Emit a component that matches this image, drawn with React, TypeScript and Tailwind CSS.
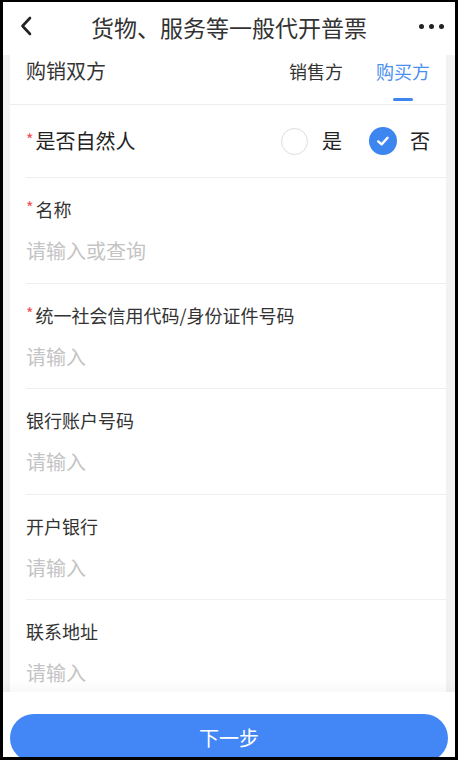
import { useState } from 'react';

const fields = [
  { label: '名称', required: true, placeholder: '请输入或查询' },
  { label: '统一社会信用代码/身份证件号码', required: true, placeholder: '请输入' },
  { label: '银行账户号码', required: false, placeholder: '请输入' },
  { label: '开户银行', required: false, placeholder: '请输入' },
  { label: '联系地址', required: false, placeholder: '请输入' },
];

const font = { fontFamily: '"Noto Sans CJK SC", "Noto Sans", sans-serif' };

function Star() {
  return <span className="text-[#f0504d] text-[16px] mr-[2px] relative -top-[2px]">*</span>;
}

function Check() {
  return (
    <span className="flex h-[28px] w-[28px] items-center justify-center rounded-full bg-[#3d86f0]">
      <svg width="16" height="16" viewBox="0 0 16 16">
        <path d="M3.2 8.4 L6.6 11.4 L12.6 4.8" fill="none" stroke="#fff" strokeWidth="2.4" strokeLinecap="round" strokeLinejoin="round" />
      </svg>
    </span>
  );
}

export default function App() {
  const [natural, setNatural] = useState(false);

  return (
    <div
      className="w-[458px] h-[760px] bg-black pt-[2px] pl-[3px] pr-[3px] pb-[3px] overflow-hidden"
      style={font}
    >
      <div className="flex h-full flex-col bg-white">
        {/* Header */}
        <div className="relative flex h-[53px] shrink-0 items-center justify-center pb-[4px]">
          <svg className="absolute left-[16px] top-[14px]" width="16" height="20" viewBox="0 0 16 20">
            <path d="M11 2 L3.5 10 L11 18" fill="none" stroke="#222" strokeWidth="2.6" strokeLinecap="round" strokeLinejoin="round" />
          </svg>
          <h1 className="text-[23px] leading-[30px] text-[#333]">货物、服务等一般代开普票</h1>
          <div className="absolute right-[11px] top-[22px] flex gap-[5px]">
            <span className="h-[5px] w-[5px] rounded-full bg-[#222]" />
            <span className="h-[5px] w-[5px] rounded-full bg-[#222]" />
            <span className="h-[5px] w-[5px] rounded-full bg-[#222]" />
          </div>
        </div>

        {/* Body */}
        <div className="flex-1 overflow-hidden bg-[#f2f2f2] pl-[7px] pr-[9px]">
          <div className="bg-white">
            {/* Section header */}
            <div className="flex h-[50px] items-start justify-between border-b border-[#eeeeee] pl-[16px] pr-[16px]">
              <span className="pt-[1px] text-[20px] leading-[30px] text-[#333]">购销双方</span>
              <div className="flex gap-[33px]">
                <span className="pt-[1px] text-[18px] leading-[30px] text-[#333]">销售方</span>
                <div className="flex flex-col items-center">
                  <span className="pt-[1px] text-[18px] leading-[30px] text-[#4a90f0]">购买方</span>
                  <span className="mt-[12px] h-[3px] w-[20px] rounded-full bg-[#3d86f0]" />
                </div>
              </div>
            </div>

            {/* Natural person */}
            <div className="flex h-[72px] items-center justify-between pl-[16px] pr-[16px]">
              <div className="flex items-center text-[20px] text-[#222]">
                <Star />
                是否自然人
              </div>
              <div className="flex items-center">
                <button className="flex items-center" onClick={() => setNatural(true)}>
                  {natural ? <Check /> : <span className="h-[27px] w-[27px] rounded-full border-[1.5px] border-[#dddddd]" />}
                  <span className="ml-[14px] text-[20px] text-[#222]">是</span>
                </button>
                <button className="ml-[27px] flex items-center" onClick={() => setNatural(false)}>
                  {!natural ? <Check /> : <span className="h-[28px] w-[28px] rounded-full border-[1.5px] border-[#dddddd]" />}
                  <span className="ml-[13px] text-[20px] text-[#222]">否</span>
                </button>
              </div>
            </div>

            {fields.map((f) => (
              <div key={f.label}>
                <div className="ml-[16px] h-px bg-[#efefef]" />
                <div className="pl-[16px] pr-[16px] pt-[19px] pb-[17.5px]">
                  <div className="flex items-center text-[18px] leading-[24px] text-[#333]">
                    {f.required && <Star />}
                    {f.label}
                  </div>
                  <input
                    className="mt-[16px] block h-[28px] w-full bg-transparent text-[20px] leading-[28px] text-[#333] outline-none placeholder:text-[#c4c4c4]"
                    placeholder={f.placeholder}
                    style={font}
                  />
                </div>
              </div>
            ))}
          </div>
        </div>

        {/* Footer */}
        <div className="h-[65px] shrink-0 overflow-hidden bg-white px-[7px] pt-[22px] shadow-[0_-6px_10px_rgba(0,0,0,0.03)]">
          <button className="h-[48px] w-full rounded-full bg-[#4287f5] text-[20px] text-white" style={font}>
            下一步
          </button>
        </div>
      </div>
    </div>
  );
}
